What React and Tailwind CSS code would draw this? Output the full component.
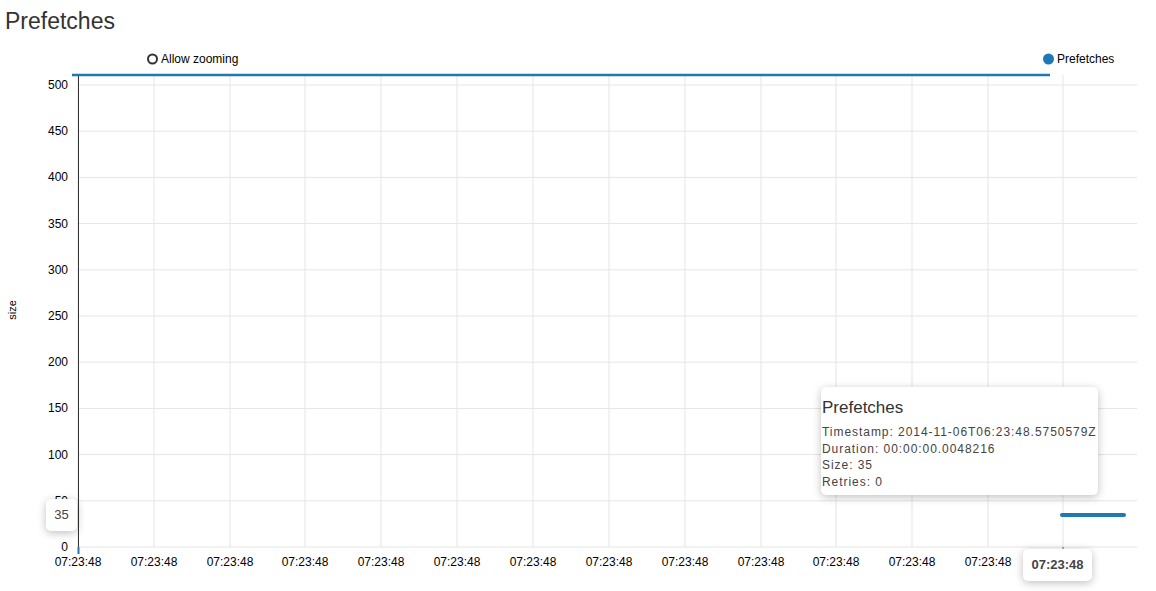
export default function App() {
  const xs = [78, 154, 230, 305, 381, 457, 533, 609, 685, 761, 836, 912, 988, 1063];
  const ys = [0, 50, 100, 150, 200, 250, 300, 350, 400, 450, 500];
  const yOf = (v) => 547 - v * 0.924;
  const font = { fontFamily: "Arial, 'Liberation Sans', sans-serif" };
  return (
    <div className="w-[1156px] h-[591px] bg-white relative overflow-hidden" style={font}>
      <div className="h-[40px] pl-[5px] pt-[6px] text-[23px] leading-[30px] text-[#333]">Prefetches</div>
      <svg width="1156" height="551" viewBox="0 40 1156 551" className="block">
        {ys.map((v) => (
          <line key={v} x1="78" x2="1137" y1={yOf(v)} y2={yOf(v)} stroke="#e5e5e5" strokeWidth="1" />
        ))}
        {xs.map((x) => (
          <line key={x} x1={x} x2={x} y1="75" y2="547" stroke="#e5e5e5" strokeWidth="1" />
        ))}
        <line x1="78.5" x2="78.5" y1="75" y2="547" stroke="#333" strokeWidth="1" />
        {ys.map((v) => (
          <text key={v} x="68" y={yOf(v) + 4} textAnchor="end" fontSize="12" fill="#000">{v}</text>
        ))}
        {xs.map((x) => (
          <text key={x} x={x} y="566" textAnchor="middle" fontSize="12" fill="#000">07:23:48</text>
        ))}
        <text x="16" y="310" fontSize="11" fill="#000" transform="rotate(-90 16 310)" textAnchor="middle">size</text>
        <line x1="72" x2="1050" y1="75" y2="75" stroke="#1f77b4" strokeWidth="2.5" />
        <line x1="1062" x2="1124" y1="515" y2="515" stroke="#1f77b4" strokeWidth="4" strokeLinecap="round" />
        <line x1="78.5" x2="78.5" y1="547" y2="554" stroke="#1f77b4" strokeWidth="2" />
        <line x1="1063" x2="1063" y1="547" y2="552" stroke="#1f77b4" strokeWidth="1" />
        <circle cx="152.5" cy="59" r="4.5" fill="#fff" stroke="#333" strokeWidth="2" />
        <text x="161" y="63" fontSize="12" fill="#000">Allow zooming</text>
        <circle cx="1048.5" cy="59" r="5.5" fill="#1f77b4" />
        <text x="1057" y="63" fontSize="12" fill="#000">Prefetches</text>
      </svg>
      <div className="absolute left-[821px] top-[387px] w-[277px] h-[108px] bg-white rounded-[5px] shadow-[0_2px_8px_rgba(0,0,0,0.25)] px-[1px] pt-[10px] text-[#333]">
        <div className="text-[17px] leading-[22px] mb-[5px]">Prefetches</div>
        <div className="text-[12px] leading-[16.5px] tracking-[0.95px] text-[#444]">
          <div>Timestamp: 2014-11-06T06:23:48.5750579Z</div>
          <div>Duration: 00:00:00.0048216</div>
          <div>Size: 35</div>
          <div>Retries: 0</div>
        </div>
      </div>
      <div className="absolute left-[46px] top-[499px] w-[31px] h-[32px] bg-white rounded-[5px] shadow-[0_2px_8px_rgba(0,0,0,0.25)] flex items-center justify-center text-[13px] text-[#444]">35</div>
      <div className="absolute left-[1023px] top-[549px] w-[69px] h-[32px] bg-white rounded-[5px] shadow-[0_2px_8px_rgba(0,0,0,0.25)] flex items-center justify-center text-[13px] font-bold text-[#444]">07:23:48</div>
    </div>
  );
}
